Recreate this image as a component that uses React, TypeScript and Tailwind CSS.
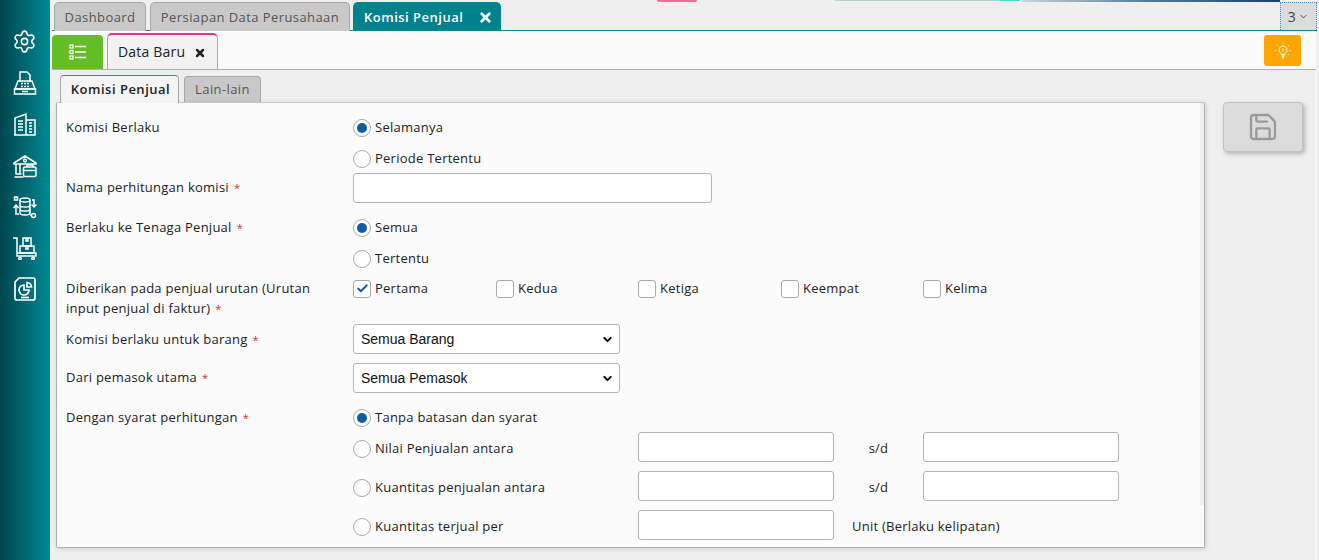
import React from "react";
import { Settings, Save, ChevronDown, Check, X } from "lucide-react";

const sans = "font-['Open_Sans','Noto_Sans',sans-serif]";

const FaxIcon = () => (
  <svg width="24" height="24" viewBox="0 0 24 24" fill="none" stroke="white" strokeWidth="1.5">
    <path d="M7 11V1h7l3 3v7" />
    <path d="M5 10h14l3 8H2z" />
    <path d="M1.5 18h21v5h-21z" />
    <path d="M8 12.5h2M11 12.5h2M14 12.5h2M8 15.5h2M11 15.5h2M14 15.5h2" />
    <path d="M9 20.5h6" />
  </svg>
);

const BuildingIcon = () => (
  <svg width="24" height="24" viewBox="0 0 24 24" fill="none" stroke="white" strokeWidth="1.5">
    <path d="M2 23V6l11-4v21" />
    <path d="M13 8h9v15H1" />
    <path d="M5 9h5M5 12h5M5 15h5M5 18h5M16 11h3M16 14h3M16 17h3M16 20h3" />
  </svg>
);

const WarehouseIcon = () => (
  <svg width="24" height="24" viewBox="0 0 24 24" fill="none" stroke="white" strokeWidth="1.5">
    <path d="M1 9l11-7 11 7v1H1z" />
    <circle cx="12" cy="6.5" r="1.4" />
    <path d="M3 10v10M7 10v10M1.5 23h9M2.5 20h6" />
    <rect x="10.5" y="13" width="12.5" height="9.5" rx="1.5" />
    <path d="M10.5 16.5h12.5M14 13v-2h6v2" />
  </svg>
);

const StockIcon = () => (
  <svg width="24" height="24" viewBox="0 0 24 24" fill="none" stroke="white" strokeWidth="1.5">
    <ellipse cx="12" cy="5" rx="5" ry="2" />
    <path d="M7 5v13c0 1 2 2 5 2s5-1 5-2V5M7 10c0 1 2 2 5 2s5-1 5-2M7 14c0 1 2 2 5 2s5-1 5-2" />
    <path d="M1.5 2h3v3h-3zM0.5 13l2.5-3 2.5 3M3 10v9h3" />
    <path d="M19 5h2v7M18.5 9.5l2.5 2.5 2.5-2.5M17 20h1" />
    <circle cx="20.5" cy="20.5" r="2" />
  </svg>
);

const CartIcon = () => (
  <svg width="24" height="24" viewBox="0 0 24 24" fill="none" stroke="white" strokeWidth="1.5">
    <path d="M0 2h4v16M4 17h19v3H4z" />
    <rect x="7" y="10" width="14" height="7" />
    <rect x="10" y="2" width="8" height="8" />
    <path d="M13 2v3h2V2M13 10v3h2v-3" />
    <circle cx="7" cy="22.5" r="1.2" />
    <circle cx="20" cy="22.5" r="1.2" />
  </svg>
);

const ReportIcon = () => (
  <svg width="24" height="24" viewBox="0 0 24 24" fill="none" stroke="white" strokeWidth="1.7">
    <path d="M6 1h14a2 2 0 0 1 2 2v18a2 2 0 0 1-2 2H4a2 2 0 0 1-2-2V5z" />
    <path d="M11 8a5 5 0 1 0 5 5h-5z" />
    <path d="M14 5.5a5 5 0 0 1 4.5 4.5H14z" />
    <path d="M8 20.5h8" />
  </svg>
);

const ListIcon = () => (
  <svg width="18" height="16" viewBox="0 0 18 16" fill="none" stroke="white">
    <rect x="1" y="1" width="3" height="3" strokeWidth="1.2" />
    <rect x="1" y="6.5" width="3" height="3" strokeWidth="1.2" />
    <rect x="1" y="12" width="3" height="3" strokeWidth="1.2" />
    <path d="M6 2.5h11M6 8h11M6 13.5h11" strokeWidth="1.5" />
  </svg>
);

const BulbIcon = () => (
  <svg width="18" height="18" viewBox="0 0 18 18" fill="none" stroke="white" strokeWidth="1">
    <path d="M9 4a4 4 0 0 0-2.4 7.2c.5.4.7.9.7 1.3h3.4c0-.4.2-.9.7-1.3A4 4 0 0 0 9 4z" />
    <path d="M9 6.5v3M9 10.5v.8" />
    <path d="M7.4 14h3.2M8 15.8h2" strokeWidth="1.4" />
    <path d="M9 .5v1.8M3 3l1.3 1.3M15 3l-1.3 1.3M.8 8.5h1.8M15.4 8.5h1.8M3.2 13l1-1M14.8 13l-1-1" strokeDasharray="1 .6" />
  </svg>
);

const Req = () => <span className="ml-[5px] text-[#e0242f] text-[11px]">*</span>;

const Radio = ({ label, checked }: { label: string; checked?: boolean }) => (
  <div className="flex items-center">
    <span className="w-[18px] h-[18px] rounded-full border border-[#a9a9a9] bg-white flex items-center justify-center mr-1">
      {checked && <span className="w-[10px] h-[10px] rounded-full bg-[#0f5aa0]" />}
    </span>
    <span>{label}</span>
  </div>
);

const Checkbox = ({ label, checked }: { label: string; checked?: boolean }) => (
  <div className="flex items-center">
    <span className="w-[18px] h-[18px] rounded-[3px] border border-[#a9a9a9] bg-white flex items-center justify-center mr-1">
      {checked && <Check size={13} strokeWidth={3.5} className="text-[#0f5aa0]" />}
    </span>
    <span>{label}</span>
  </div>
);

const TextBox = ({ width }: { width: string }) => (
  <div className={`${width} h-[30px] bg-white border border-[#b5b5b5] rounded-[3px]`} />
);

const SelectBox = ({ value }: { value: string }) => (
  <div className="w-[267px] h-[30px] bg-white border border-[#b5b5b5] rounded-[3px] flex items-center justify-between pl-[7px] pr-[5px] font-['Liberation_Sans',sans-serif] text-[14px] tracking-normal text-[#111]">
    <span>{value}</span>
    <ChevronDown size={13} strokeWidth={3.5} className="text-black" />
  </div>
);

const Row = ({ label, className, children }: { label?: React.ReactNode; className: string; children?: React.ReactNode }) => (
  <div className={`flex items-center ${className}`}>
    <div className="w-[287px] shrink-0">{label}</div>
    {children}
  </div>
);

const TopTab = ({ label, width }: { label: string; width: string }) => (
  <div className={`${width} h-[30px] mt-[2px] flex items-center justify-center bg-[#c9c9c9] border border-[#a8a8a8] border-b-0 rounded-t-[5px] text-[#555] tracking-[0.42px]`}>
    {label}
  </div>
);

export default function App() {
  return (
    <div className={`${sans} relative w-[1319px] h-[560px] overflow-hidden flex bg-[#efefef] text-[13px] tracking-[0.25px] text-[#222]`}>
      <div className="absolute top-0 left-[657px] w-[40px] h-[2px] rounded-b-full bg-[#f0709a]" />
      <div className="absolute top-0 left-[835px] w-[165px] h-[1px] bg-[#b5d6d2]" />
      <div className="absolute top-0 left-[1000px] w-[20px] h-[1px] bg-[#3fe0cc]" />
      <div className="absolute top-0 left-[1021px] w-[259px] h-[2px] bg-gradient-to-r from-[#c9d6dc] via-[#557a94] to-[#1f3f75]" />

      <aside className="w-[50px] shrink-0 bg-gradient-to-r from-[#00464e] to-[#008a94] flex flex-col items-center pt-[29px] gap-[17.2px] pr-[1px]">
        <Settings size={25} strokeWidth={1.5} className="text-white" />
        <FaxIcon />
        <BuildingIcon />
        <WarehouseIcon />
        <StockIcon />
        <CartIcon />
        <ReportIcon />
      </aside>

      <div className="flex-1 flex flex-col min-w-0 pl-[2px] pr-[2px]">
        <div className="h-[31px] shrink-0 flex items-start gap-[4px] pl-[2px] border-b border-[#008a94] relative">
          <TopTab label="Dashboard" width="w-[92px]" />
          <TopTab label="Persiapan Data Perusahaan" width="w-[200px]" />
          <div className="h-[28px] mt-[2px] -ml-[1px] w-[148px] pl-[11px] pr-[8px] pt-[3px] flex items-center justify-between bg-[#00828c] rounded-t-[5px] text-white font-semibold tracking-[0.5px]">
            <span>Komisi Penjual</span>
            <X size={15} strokeWidth={4.5} />
          </div>
          <div className="ml-auto h-[28px] mt-[2px] w-[37px] bg-[#dcdcdc] border border-b-0 border-dotted border-[#4a90c8] flex items-center justify-center gap-[2px] text-[#444] text-[14px]">
            3 <ChevronDown size={11} strokeWidth={2} />
          </div>
        </div>

        <div className="h-[39px] shrink-0 bg-[#fbfbfb] border-b border-[#b0b0b0] flex items-end relative mr-[1px]">
          <div className="h-[34px] w-[51px] bg-[#64bc26] rounded-t-[4px] flex items-center justify-center">
            <ListIcon />
          </div>
          <div className="h-[36px] w-[111px] ml-[4px] pb-[2px] bg-[#f2f2f2] border border-[#a8a8a8] border-b-0 border-t-2 border-t-[#e8308c] rounded-t-[5px] flex items-center pl-[10px] gap-[9px] text-[14px] tracking-[0.2px]">
            <span>Data Baru</span>
            <X size={12} strokeWidth={5} className="text-[#222] mt-[3px]" />
          </div>
          <div className="absolute right-[15px] top-[4px] w-[37px] h-[31px] bg-[#ffa500] rounded-[3px] flex items-center justify-center">
            <BulbIcon />
          </div>
        </div>

        <div className="flex-1 flex items-start pl-[4px] mr-[1px] border-r border-[#fafafa]">
          <div className="w-[1149px]">
            <div className="h-[32px] flex items-end pl-[4px] gap-[5px]">
              <div className="h-[28px] w-[119px] pl-[2px] pt-[1px] bg-[#f4f4f4] border border-[#a8a8a8] border-b-0 border-t-[#e8308c] rounded-t-[4px] flex items-center justify-center font-semibold tracking-[0.5px] relative top-[1px] z-10">
                Komisi Penjual
              </div>
              <div className="h-[26px] w-[77px] pt-[1px] bg-[#c9c9c9] border border-[#a8a8a8] border-b-0 rounded-t-[4px] flex items-center justify-center text-[#555] tracking-[0.4px]">
                Lain-lain
              </div>
            </div>
            <div className="relative h-[446px] bg-[#fbfbfb] border border-[#b0b0b0] border-t-[#c8c8c8] rounded-[2px] shadow-[1px_1px_4px_rgba(0,0,0,0.15)] pl-[9px] pt-[9px]">
              <div className="absolute top-0 right-0 w-[4px] h-[402px] bg-[#efefef]" />
              <Row className="h-[31px]" label="Komisi Berlaku"><Radio label="Selamanya" checked /></Row>
              <Row className="h-[30px] pt-[2px]"><Radio label="Periode Tertentu" /></Row>
              <Row className="h-[30px]" label={<>Nama perhitungan komisi<Req /></>}><TextBox width="w-[359px]" /></Row>
              <Row className="h-[31px] mt-[9px]" label={<>Berlaku ke Tenaga Penjual<Req /></>}><Radio label="Semua" checked /></Row>
              <Row className="h-[30px] pt-[2px]"><Radio label="Tertentu" /></Row>
              <div className="flex mt-[5px] h-[40px]">
                <div className="w-[287px] shrink-0 leading-[20px]">
                  <div>Diberikan pada penjual urutan (Urutan</div>
                  <div>input penjual di faktur)<Req /></div>
                </div>
                <div className="flex items-start pt-[1px]">
                  <div className="w-[143px]"><Checkbox label="Pertama" checked /></div>
                  <div className="w-[142px]"><Checkbox label="Kedua" /></div>
                  <div className="w-[143px]"><Checkbox label="Ketiga" /></div>
                  <div className="w-[142px]"><Checkbox label="Keempat" /></div>
                  <Checkbox label="Kelima" />
                </div>
              </div>
              <Row className="h-[30px] mt-[6px]" label={<span className="relative top-[1px]">Komisi berlaku untuk barang<Req /></span>}><SelectBox value="Semua Barang" /></Row>
              <Row className="h-[30px] mt-[9px]" label={<>Dari pemasok utama<Req /></>}><SelectBox value="Semua Pemasok" /></Row>
              <Row className="h-[26px] mt-[12px]" label={<>Dengan syarat perhitungan<Req /></>}><Radio label="Tanpa batasan dan syarat" checked /></Row>
              <Row className="h-[31px]">
                <div className="w-[285px] mt-[4px]"><Radio label="Nilai Penjualan antara" /></div>
                <TextBox width="w-[196px]" />
                <div className="w-[89px] text-center mt-[4px]">s/d</div>
                <TextBox width="w-[196px]" />
              </Row>
              <Row className="h-[31px] mt-[8px]">
                <div className="w-[285px] mt-[4px]"><Radio label="Kuantitas penjualan antara" /></div>
                <TextBox width="w-[196px]" />
                <div className="w-[89px] text-center mt-[4px]">s/d</div>
                <TextBox width="w-[196px]" />
              </Row>
              <Row className="h-[31px] mt-[8px]">
                <div className="w-[285px] mt-[4px]"><Radio label="Kuantitas terjual per" /></div>
                <TextBox width="w-[196px]" />
                <div className="ml-[18px] mt-[4px]">Unit (Berlaku kelipatan)</div>
              </Row>
            </div>
          </div>
          <div className="ml-[18px] mt-[32px] w-[80px] h-[50px] bg-[#dcdcdc] border border-[#c2c2c2] rounded-[4px] shadow-[2px_2px_4px_rgba(0,0,0,0.25)] flex items-center justify-center">
            <Save size={32} strokeWidth={1.7} className="text-[#9a9a9a]" />
          </div>
        </div>
      </div>
    </div>
  );
}
